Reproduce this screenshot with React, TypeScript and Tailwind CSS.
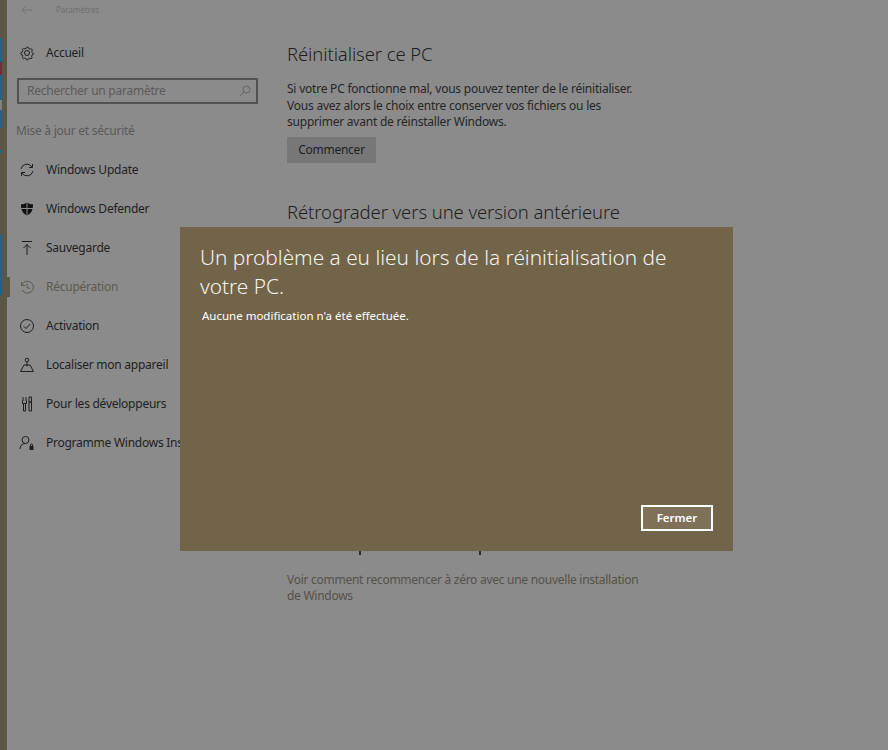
import React from "react";

const Nav = ({ icon, label, cls = "" }: { icon: React.ReactNode; label: string; cls?: string }) => (
  <div className={`h-[39px] flex items-center pl-[12px] text-[12px] tracking-[-0.25px] whitespace-nowrap ${cls || "text-[#1f1f1f]"}`}>
    <span className="w-[27px] h-[16px] shrink-0 flex items-center">{icon}</span>
    <span>{label}</span>
  </div>
);

const S = ({ children, c = "#1f1f1f" }: { children: React.ReactNode; c?: string }) => (
  <svg width="16" height="16" viewBox="0 0 16 16" fill="none" stroke={c} strokeWidth="1">{children}</svg>
);

export default function App() {
  return (
    <div className="relative w-[888px] h-[750px] overflow-hidden flex bg-[#8b8b8b] font-['Noto_Sans',sans-serif]">
      <div className="w-[7px] shrink-0 flex">
        <div className="w-[2px] flex flex-col bg-[#5c5648]">
          <div className="h-[38px]" />
          <div className="h-[24px] bg-[#1f6489]" />
          <div className="h-[13px] bg-[#6e2f3a]" />
          <div className="h-[25px] bg-[#1f6489]" />
          <div className="h-[10px] bg-[#7f7f7f]" />
          <div className="h-[18px] bg-[#1f6489]" />
          <div className="h-[22px]" />
          <div className="h-[3px] bg-[#1f6489]" />
          <div className="h-[82px]" />
          <div className="h-[60px] bg-[#1f6489]" />
        </div>
        <div className="w-[5px] bg-[#5c5648]" />
      </div>
      <div className="w-[273px] shrink-0 relative">
        <div className="h-[20px] flex items-center pl-[14px]">
          <svg width="12" height="12" viewBox="0 0 12 12" fill="none" stroke="#757575"><path d="M11 6H1M5.500 1.500 1 6l4.500 4.500" /></svg>
          <span className="ml-[23px] text-[8px] text-[#6e6e6e]">Paramètres</span>
        </div>
        <div className="mt-[13px]">
          <Nav label="Accueil" icon={<S><circle cx="8" cy="8" r="2.500" /><path d="M8 1.500l1.500.3.400 1.500 1.500.7 1.400-.6 1.200 1.400-.8 1.300.4 1.700 1.300.7v1.300l-1.400.5-.5 1.600.7 1.300-1.300 1.200-1.300-.7-1.600.6-.5 1.300H7.500l-.4-1.400-1.600-.6-1.300.7-1.300-1.200.7-1.400-.6-1.500-1.500-.5V7.500l1.500-.5.500-1.500-.7-1.400L4.500 2.900l1.300.7 1.500-.6z" transform="translate(.6 .6) scale(.92)" /></S>} />
        </div>
        <div className="mt-[6px] ml-[10px] w-[241px] h-[26px] border-2 border-[#525252] flex items-center justify-between pl-[8px] pr-[5px] text-[12px] tracking-[-0.25px] text-[#5b5b5b]">
          <span>Rechercher un paramètre</span>
          <svg width="12" height="12" viewBox="0 0 12 12" fill="none" stroke="#666"><circle cx="7.500" cy="4.500" r="3.500" /><path d="M5 7l-4 4" /></svg>
        </div>
        <div className="mt-[18px] ml-[9px] text-[12px] tracking-[-0.25px] leading-[17px] text-[#5a5a5a]">Mise à jour et sécurité</div>
        <div className="mt-[11px]">
          <Nav label="Windows Update" icon={<S><path d="M2 7a6 6 0 0 1 11-2M14 9a6 6 0 0 1-11 2" /><path d="M13.500 2v3.500H10M2.500 14v-3.500H6" /></S>} />
          <Nav label="Windows Defender" icon={<svg width="16" height="16" viewBox="0 0 16 16"><path fill="#111" d="M8 1.500c2 1.300 4 1.800 6 1.800 0 5-1 9-6 11.200-5-2.200-6-6.200-6-11.200 2 0 4-.5 6-1.800z" /><path stroke="#8b8b8b" d="M8 1v14M1.500 7.500h13" /></svg>} />
          <Nav label="Sauvegarde" icon={<S><path d="M3 1.500h10M8 15V4.500M4.500 8 8 4.500 11.500 8" /></S>} />
          <div className="relative">
            <div className="absolute left-0 top-[10px] w-[3px] h-[20px] bg-[#5c5648]" />
            <Nav label="Récupération" cls="text-[#5e5a50]" icon={<S c="#5e5a50"><path d="M2.500 3v3.500H6M2.800 6a6 6 0 1 1 .3 5M8 4.500V8.500l3 1" /></S>} />
          </div>
          <Nav label="Activation" icon={<S><circle cx="8" cy="8" r="6.500" /><path d="M4.800 8.300 7 10.500l4.200-4.500" /></S>} />
          <Nav label="Localiser mon appareil" icon={<S><circle cx="8" cy="3" r="1.800" /><path d="M1.500 14.500h13L11 8h-6zM8 5v4.500" /></S>} />
          <Nav label="Pour les développeurs" icon={<S><path d="M4 1v4M7 1v4M3.500 4.500v3h4v-3M4.500 7.500V15h2V7.500M10 1h2.500v5H10zM10 6h2.500v9H10z" /></S>} />
          <Nav label="Programme Windows Insider" icon={<S><circle cx="6.500" cy="5" r="3.500" /><path d="M1 14c0-3 2-5.500 5.500-5.500" /><path fill="#1f1f1f" stroke="none" d="M10.500 11h4v4h-4z" /><path d="M11.500 11v-1a1 1 0 0 1 2 0v1" /></S>} />
        </div>
      </div>
      <div className="pl-[7px]">
        <div className="mt-[41px] text-[18.5px] tracking-[-0.1px] font-light leading-[26px] text-[#1f1f1f]">Réinitialiser ce PC</div>
        <div className="mt-[14px] w-[370px] text-[12px] tracking-[-0.22px] leading-[16.500px] text-[#262626]">
          Si votre PC fonctionne mal, vous pouvez tenter de le réinitialiser.<br />Vous avez alors le choix entre conserver vos fichiers ou les<br />supprimer avant de réinstaller Windows.
        </div>
        <div className="mt-[6px] w-[89px] h-[26px] bg-[#777777] flex items-center justify-center text-[12px] tracking-[-0.25px] text-[#1f1f1f]">Commencer</div>
        <div className="mt-[36px] text-[18.5px] tracking-[-0.1px] font-light leading-[26px] text-[#1f1f1f]">Rétrograder vers une version antérieure</div>
        <div className="mt-[347px] w-[370px] text-[12px] tracking-[-0.27px] leading-[16.500px] text-[#55524a]">
          Voir comment recommencer à zéro avec une nouvelle installation<br />de Windows
        </div>
      </div>
      <div className="absolute left-[359px] top-[550px] w-[2px] h-[5px] bg-[#2b2b2b]" />
      <div className="absolute left-[479px] top-[550px] w-[2px] h-[5px] bg-[#2b2b2b]" />
      <div className="absolute left-[180px] top-[227px] w-[553px] h-[324px] bg-[#726448] flex flex-col pl-[20px] pr-[20px] pb-[20px] text-white">
        <div className="mt-[16px] text-[20.8px] font-light leading-[29px] w-[500px] text-[#f4f2ee]">Un problème a eu lieu lors de la réinitialisation de votre PC.</div>
        <div className="mt-[7px] ml-[2px] text-[11.5px] leading-[16px]">Aucune modification n'a été effectuée.</div>
        <div className="mt-auto self-end w-[72px] h-[26px] border-2 border-white bg-[#7e7059] flex items-center justify-center text-[11.5px] font-semibold">Fermer</div>
      </div>
    </div>
  );
}
